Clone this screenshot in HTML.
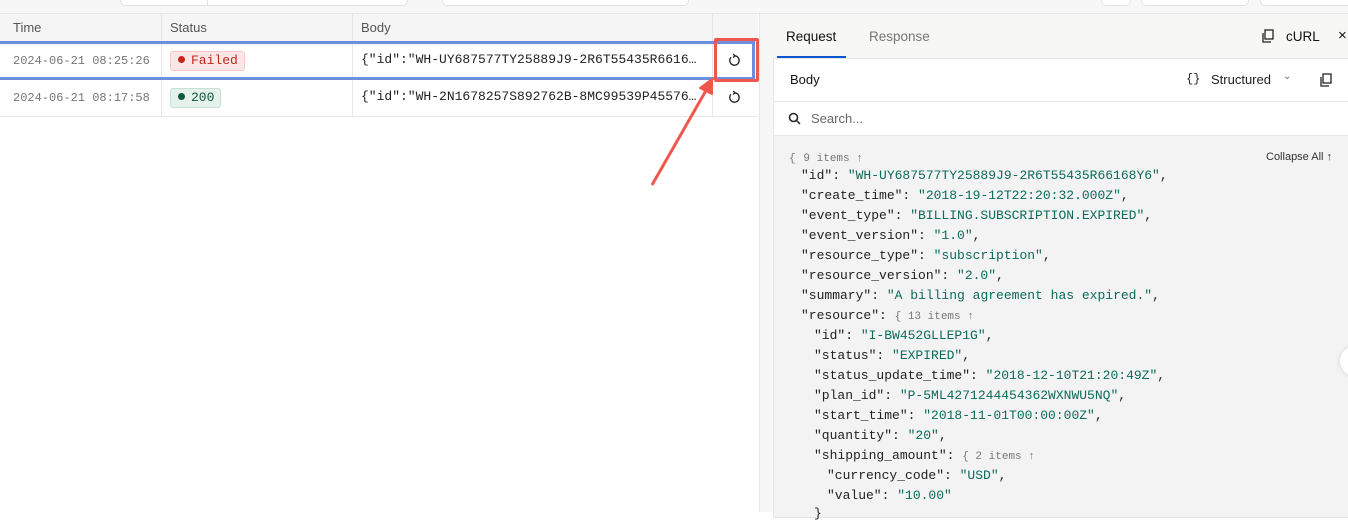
<!DOCTYPE html>
<html><head><style>
*{margin:0;padding:0;box-sizing:border-box}
body{width:1348px;height:512px;overflow:hidden;background:#fff;font-family:"Liberation Sans",sans-serif;position:relative}
.a{position:absolute}
.mono{font-family:"Liberation Mono",monospace}
.j{position:absolute;font-family:"Liberation Mono",monospace;font-size:13px;color:#222;white-space:pre;line-height:20px}
.s{color:#0b6b5a}
.m{color:#777;font-size:11px}
</style></head><body>
<!-- top bar -->
<div class="a" style="left:0;top:0;width:1348px;height:14px;background:#f7f7f7;border-bottom:1px solid #e6e6e6"></div>
<div class="a" style="left:120px;top:-6px;width:288px;height:12px;background:#fff;border:1px solid #e2e2e2;border-radius:5px"></div>
<div class="a" style="left:207px;top:-6px;width:1px;height:12px;background:#e2e2e2"></div>
<div class="a" style="left:442px;top:-6px;width:247px;height:12px;background:#fff;border:1px solid #e2e2e2;border-radius:5px"></div>
<div class="a" style="left:1101px;top:-6px;width:30px;height:12px;background:#fff;border:1px solid #e2e2e2;border-radius:5px"></div>
<div class="a" style="left:1141px;top:-6px;width:108px;height:12px;background:#fff;border:1px solid #e2e2e2;border-radius:5px"></div>
<div class="a" style="left:1260px;top:-6px;width:100px;height:12px;background:#fff;border:1px solid #e2e2e2;border-radius:5px"></div>

<!-- table header -->
<div class="a" style="left:0;top:14px;width:758px;height:29px;background:#f5f5f5;border-bottom:1px solid #e6e6e6"></div>
<div class="a" style="left:13px;top:20px;font-size:13px;color:#555">Time</div>
<div class="a" style="left:170px;top:20px;font-size:13px;color:#555">Status</div>
<div class="a" style="left:361px;top:20px;font-size:13px;color:#555">Body</div>
<div class="a" style="left:161px;top:14px;height:102px;border-left:1px solid #e6e6e6"></div>
<div class="a" style="left:352px;top:14px;height:102px;border-left:1px solid #e6e6e6"></div>
<div class="a" style="left:712px;top:14px;height:102px;border-left:1px solid #e6e6e6"></div>
<div class="a" style="left:0;top:116px;width:758px;border-top:1px solid #e6e6e6"></div>
<div class="a" style="left:0;top:79px;width:758px;border-top:1px solid #e6e6e6"></div>

<!-- row1 -->
<div class="a mono" style="left:13px;top:54px;font-size:12px;color:#777">2024-06-21 08:25:26</div>
<div class="a mono" style="left:170px;top:51px;width:75px;height:20px;background:#fde7e6;border:1px solid #f6c9c6;border-radius:3px;color:#c0251a;font-size:13px;line-height:18px;padding-left:7px"><span style="display:inline-block;width:7px;height:7px;border-radius:50%;background:#c8261b;margin-right:6px;vertical-align:1px"></span>Failed</div>
<div class="a mono" style="left:361px;top:52px;font-size:13px;color:#222">{"id":"WH-UY687577TY25889J9-2R6T55435R6616…</div>
<!-- row2 -->
<div class="a mono" style="left:13px;top:91px;font-size:12px;color:#777">2024-06-21 08:17:58</div>
<div class="a mono" style="left:170px;top:88px;width:51px;height:20px;background:#e5f2ec;border:1px solid #c6e0d4;border-radius:3px;color:#12543b;font-size:13px;line-height:18px;padding-left:7px"><span style="display:inline-block;width:7px;height:7px;border-radius:50%;background:#0d5a3b;margin-right:6px;vertical-align:1px"></span>200</div>
<div class="a mono" style="left:361px;top:89px;font-size:13px;color:#222">{"id":"WH-2N1678257S892762B-8MC99539P45576…</div>
<!-- retry icons -->
<svg class="a" style="left:727px;top:53px" width="15" height="15" viewBox="0 0 16 16"><path d="M4.3 4.6A5 5 0 1 0 8 3" fill="none" stroke="#222" stroke-width="1.4"/><path d="M6.5 1.2L8.6 3L6.5 4.8" fill="none" stroke="#222" stroke-width="1.4"/></svg>
<svg class="a" style="left:727px;top:90px" width="15" height="15" viewBox="0 0 16 16"><path d="M4.3 4.6A5 5 0 1 0 8 3" fill="none" stroke="#222" stroke-width="1.4"/><path d="M6.5 1.2L8.6 3L6.5 4.8" fill="none" stroke="#222" stroke-width="1.4"/></svg>

<!-- blue highlight -->
<div class="a" style="left:-3px;top:41px;width:758px;height:39px;border:3px solid #6b8fdc"></div>
<!-- red box -->
<div class="a" style="left:714px;top:38px;width:45px;height:44px;border:3px solid #f0574c;border-radius:2px"></div>
<!-- arrow -->
<svg class="a" style="left:640px;top:70px" width="90" height="125"><line x1="12" y1="115" x2="68" y2="17" stroke="#f0574c" stroke-width="3"/><path d="M72 9L60 18L72 24Z" fill="#f0574c" stroke="#f0574c" stroke-width="2" stroke-linejoin="round"/></svg>

<!-- right panel -->
<div class="a" style="left:759px;top:14px;width:590px;height:498px;background:#f7f7f6;border-left:1px solid #e6e6e6"></div>
<div class="a" style="left:786px;top:29px;font-size:13.5px;color:#111">Request</div>
<div class="a" style="left:777px;top:56px;width:69px;height:3px;background:#0b57d0"></div>
<div class="a" style="left:869px;top:29px;font-size:13.5px;color:#777">Response</div>
<svg class="a" style="left:1261px;top:29px" width="14" height="14" viewBox="0 0 14 14"><rect x="4" y="1" width="8" height="9" fill="none" stroke="#222" stroke-width="1.3"/><path d="M2 4v9h8" fill="none" stroke="#222" stroke-width="1.3"/></svg>
<div class="a" style="left:1286px;top:29px;font-size:13.5px;color:#111">cURL</div>
<div class="a" style="left:1338px;top:27px;font-size:15px;color:#111">×</div>

<div class="a" style="left:773px;top:58px;width:580px;height:460px;background:#f3f3f3;border:1px solid #e6e6e6"></div>
<div class="a" style="left:774px;top:59px;width:580px;height:43px;background:#fff;border-bottom:1px solid #e6e6e6"></div>
<div class="a" style="left:790px;top:72px;font-size:13px;color:#111">Body</div>
<div class="a mono" style="left:1186px;top:72px;font-size:12px;color:#222">{}</div>
<div class="a" style="left:1211px;top:72px;font-size:13px;color:#222">Structured</div>
<div class="a" style="left:1283px;top:71px;font-size:10px;color:#666">⌄</div>
<svg class="a" style="left:1319px;top:73px" width="14" height="14" viewBox="0 0 14 14"><rect x="4" y="1" width="8" height="9" fill="none" stroke="#222" stroke-width="1.3"/><path d="M2 4v9h8" fill="none" stroke="#222" stroke-width="1.3"/></svg>
<div class="a" style="left:774px;top:102px;width:580px;height:34px;background:#fff;border-bottom:1px solid #e6e6e6"></div>
<svg class="a" style="left:788px;top:112px" width="13" height="13" viewBox="0 0 13 13"><circle cx="5.5" cy="5.5" r="4" fill="none" stroke="#222" stroke-width="1.5"/><line x1="8.5" y1="8.5" x2="12" y2="12" stroke="#222" stroke-width="1.5"/></svg>
<div class="a" style="left:811px;top:111px;font-size:13px;color:#666">Search...</div>
<div class="a" style="left:1266px;top:151px;font-size:11px;color:#333">Collapse All ↑</div>

<div class="j" style="left:789px;top:148px"><span class="m">{</span> <span class="m">9 items ↑</span></div>
<div class="j" style="left:801px;top:166px">"id": <span class="s">"WH-UY687577TY25889J9-2R6T55435R66168Y6"</span>,
"create_time": <span class="s">"2018-19-12T22:20:32.000Z"</span>,
"event_type": <span class="s">"BILLING.SUBSCRIPTION.EXPIRED"</span>,
"event_version": <span class="s">"1.0"</span>,
"resource_type": <span class="s">"subscription"</span>,
"resource_version": <span class="s">"2.0"</span>,
"summary": <span class="s">"A billing agreement has expired."</span>,
"resource": <span class="m">{ 13 items ↑</span></div>
<div class="j" style="left:814px;top:326px">"id": <span class="s">"I-BW452GLLEP1G"</span>,
"status": <span class="s">"EXPIRED"</span>,
"status_update_time": <span class="s">"2018-12-10T21:20:49Z"</span>,
"plan_id": <span class="s">"P-5ML4271244454362WXNWU5NQ"</span>,
"start_time": <span class="s">"2018-11-01T00:00:00Z"</span>,
"quantity": <span class="s">"20"</span>,
"shipping_amount": <span class="m">{ 2 items ↑</span></div>
<div class="j" style="left:827px;top:466px">"currency_code": <span class="s">"USD"</span>,
"value": <span class="s">"10.00"</span></div>
<div class="j" style="left:814px;top:504px">}</div>
<div class="a" style="left:1340px;top:346px;width:30px;height:30px;border-radius:50%;background:#fff;box-shadow:0 0 4px rgba(0,0,0,.15)"></div>
</body></html>
